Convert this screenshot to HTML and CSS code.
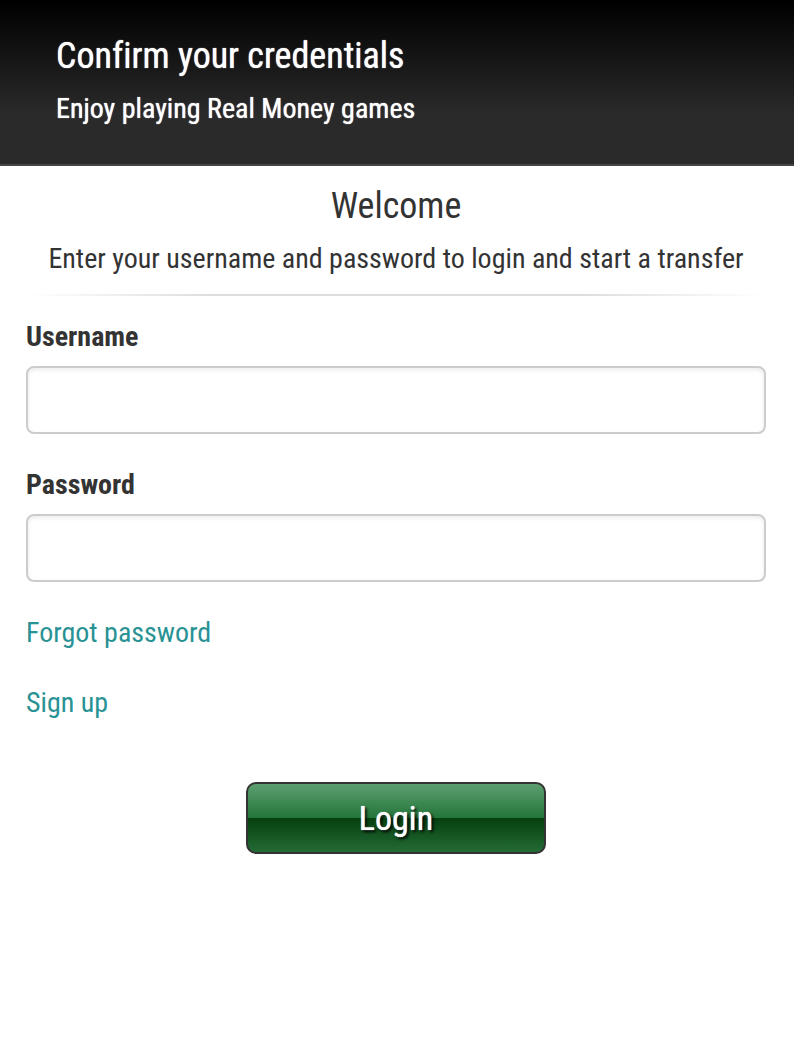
FILE: index.html
```html
<!DOCTYPE html>
<html lang="en">
<head>
<meta charset="utf-8">
<meta name="viewport" content="width=device-width, initial-scale=1">
<title>Confirm your credentials</title>
<link rel="stylesheet" href="styles.css">
</head>
<body>
<header class="banner">
  <h1 class="banner-title">Confirm your credentials</h1>
  <p class="banner-text">Enjoy playing Real Money games</p>
</header>
<main class="content">
  <div class="intro">
    <h2 class="intro-title">Welcome</h2>
    <p class="intro-text">Enter your username and password to login and start a transfer</p>
  </div>
  <form class="login">
    <label class="label" for="username">Username</label>
    <input class="field" id="username" type="text">
    <label class="label" for="password">Password</label>
    <input class="field" id="password" type="password">
    <a class="link" href="#forgot">Forgot password</a>
    <a class="link" href="#signup">Sign up</a>
    <button class="submit" type="submit">Login</button>
  </form>
</main>
</body>
</html>
```
FILE: styles.css
```css
* { box-sizing: border-box; }
body {
  margin: 0;
  background: #fff;
  color: #333;
  font-family: "Roboto Condensed", Roboto, sans-serif;
  font-size: 28px;
  font-variant-ligatures: none;
  line-height: 42px;
}
h1, h2, p { margin: 0; }
.banner {
  padding: 28px 56px 30px;
  border-bottom: 2px solid #444;
  background: linear-gradient(#000, #2a2a2a 70%);
  color: #fff;
  text-shadow: 0 0 1px #fff;
}
.banner-title { font-size: 36px; font-weight: 400; line-height: 56px; }
.banner-text { font-weight: 400; line-height: 50px; }
.content { padding: 12px 28px 40px 26px; }
.intro { text-align: center; }
.intro-title { font-size: 36px; font-weight: 400; line-height: 56px; }
.intro-text { line-height: 50px; }
.intro::after {
  content: "";
  display: block;
  height: 2px;
  margin-top: 10px;
  background: linear-gradient(to right, transparent, #ddd 25%, #ddd 75%, transparent);
}
.login { display: flex; flex-direction: column; padding-top: 20px; }
.label { font-weight: 700; margin-bottom: 8px; }
.field {
  width: 100%;
  height: 68px;
  margin: 0 0 30px;
  padding: 8px 16px;
  border: 2px solid #ccc;
  border-radius: 8px;
  box-shadow: inset 0 2px 4px rgba(0, 0, 0, 0.08);
  font: inherit;
}
.link { align-self: flex-start; margin-bottom: 28px; color: #299294; text-decoration: none; }
.submit {
  align-self: center;
  width: 300px;
  height: 72px;
  margin-top: 30px;
  border: 2px solid #333;
  border-radius: 10px;
  background: linear-gradient(#5d9f70, #23753a 50%, #05400f 50%, #246b36);
  color: #fff;
  font: inherit;
  font-size: 34px;
  font-weight: 400;
  text-shadow: 0 0 1px #fff, 2px 2px 3px #000;
}
```
